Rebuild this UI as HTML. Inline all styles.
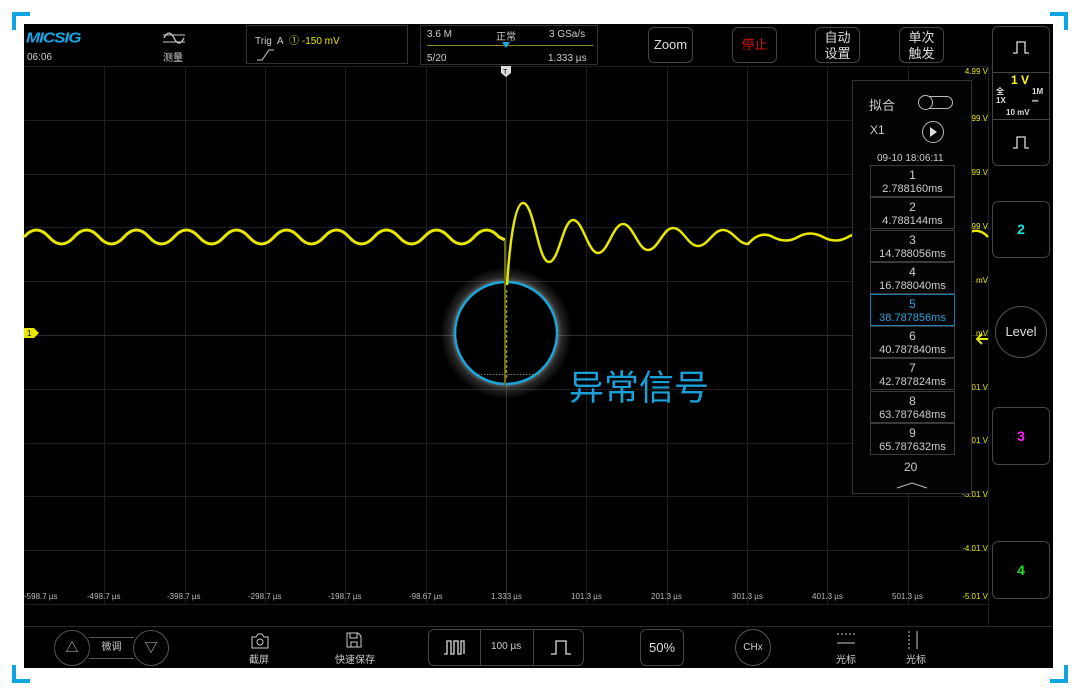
<!DOCTYPE html>
<html><head><meta charset="utf-8"><style>
*{margin:0;padding:0;box-sizing:border-box}
body{width:1080px;height:695px;background:#fff;position:relative;overflow:hidden;font-family:"Liberation Sans","Noto Sans CJK SC",sans-serif;color:#ccc}
.a{position:absolute}
.scr{left:24px;top:24px;width:1029px;height:644px;background:#000}
.btn{position:absolute;border:1px solid #444;border-radius:6px;color:#ddd;text-align:center;font-size:13px}
.br{position:absolute;background:#0ea5e0}
.vl{position:absolute;color:#e6e600;font-size:8px;right:92px}
.it{position:absolute;left:870px;width:85px;height:32px;border:1px solid #3a3a3a;text-align:center;font-size:12px;line-height:14px;padding-top:2px;color:#ccc}
.it small{font-size:11px;display:block}
.tl{position:absolute;top:592px;font-size:8px;color:#bbb}
</style></head><body>
<div class="br" style="left:12px;top:12px;width:18px;height:4px"></div>
<div class="br" style="left:12px;top:12px;width:4px;height:18px"></div>
<div class="br" style="left:1050px;top:12px;width:18px;height:4px"></div>
<div class="br" style="left:1064px;top:12px;width:4px;height:18px"></div>
<div class="br" style="left:12px;top:679px;width:18px;height:4px"></div>
<div class="br" style="left:12px;top:665px;width:4px;height:18px"></div>
<div class="br" style="left:1050px;top:679px;width:18px;height:4px"></div>
<div class="br" style="left:1064px;top:665px;width:4px;height:18px"></div>
<div class="a scr"></div>

<!-- top bar -->
<div class="a" style="left:26px;top:28px;color:#1aa6e6;font-weight:900;font-style:italic;font-size:17px;letter-spacing:-1px;transform:scaleY(0.85)">MICSIG</div>
<div class="a" style="left:27px;top:52px;font-size:10px;color:#ccc">06:06</div>
<svg class="a" style="left:162px;top:30px" width="24" height="16"><path d="M1 5h22M1 12h22" stroke="#ccc" stroke-width="1"/><path d="M2 8Q7 -2 12 8T22 8" stroke="#ccc" fill="none" stroke-width="1.3"/></svg>
<div class="a" style="left:163px;top:49px;font-size:10px">测量</div>
<div class="a" style="left:246px;top:25px;width:162px;height:39px;border:1px solid #333"></div>
<div class="a" style="left:255px;top:32px;font-size:10px">Trig&nbsp; A&nbsp; <span style="color:#e6e600">① -150 mV</span></div>
<svg class="a" style="left:256px;top:46px" width="20" height="16"><path d="M1 14h5l7-10h5" stroke="#ccc" fill="none"/></svg>
<div class="a" style="left:420px;top:25px;width:178px;height:40px;border:1px solid #333"></div>
<div class="a" style="left:427px;top:29px;font-size:10px">3.6 M</div>
<div class="a" style="left:496px;top:28px;font-size:10px">正常</div>
<div class="a" style="left:549px;top:29px;font-size:10px">3 GSa/s</div>
<div class="a" style="left:427px;top:45px;width:166px;height:1px;background:#8a8a20"></div>
<svg class="a" style="left:501px;top:41px" width="10" height="8"><path d="M1 1h8l-4 6z" fill="#1aa6e6"/></svg>
<div class="a" style="left:427px;top:53px;font-size:10px">5/20</div>
<div class="a" style="left:548px;top:53px;font-size:10px">1.333 µs</div>
<div class="btn" style="left:648px;top:27px;width:45px;height:36px;line-height:34px">Zoom</div>
<div class="btn" style="left:732px;top:27px;width:45px;height:36px;line-height:34px;color:#d01010">停止</div>
<div class="btn" style="left:815px;top:27px;width:45px;height:36px;line-height:16px;padding-top:2px">自动<br>设置</div>
<div class="btn" style="left:899px;top:27px;width:45px;height:36px;line-height:16px;padding-top:2px">单次<br>触发</div>

<!-- grid -->
<svg class="a" style="left:0;top:0" width="1080" height="695">
<g stroke="#1e1e1e" stroke-width="1">
<path d="M24.5 66.5H988M24.5 120.5H988M24.5 174.5H988M24.5 227.5H988M24.5 281.5H988M24.5 389.5H988M24.5 443.5H988M24.5 496.5H988M24.5 550.5H988M24.5 604.5H988"/>
<path d="M104.5 66V604M185.5 66V604M265.5 66V604M345.5 66V604M426.5 66V604M586.5 66V604M667.5 66V604M747.5 66V604M827.5 66V604M908.5 66V604M988.5 66V626"/>
<path d="M24 626.5H988" stroke="#333"/>
</g>
<path d="M24 335.5H988M506.5 66V604" stroke="#2c2c2c"/>
<!-- trigger marker -->
<path d="M501 66h10v7l-5 4-5-4z" fill="#ddd"/><text x="503" y="74" font-size="7" fill="#000" font-family="Liberation Sans">T</text>
<path d="M24 328h10l5 5-5 5H24z" fill="#e6e600"/><text x="27" y="336" font-size="8" fill="#000" font-family="Liberation Sans">1</text>
<!-- circle glow -->
<defs><radialGradient id="g"><stop offset="0.72" stop-color="#fff" stop-opacity="0.55"/><stop offset="0.85" stop-color="#fff" stop-opacity="0.15"/><stop offset="1" stop-color="#fff" stop-opacity="0"/></radialGradient></defs>
<circle cx="506" cy="333" r="66" fill="url(#g)"/>
<circle cx="506" cy="333" r="51" fill="#000" stroke="#1aa6d9" stroke-width="2.5"/>
<path d="M478 374.5H540" stroke="#777" stroke-dasharray="1.5 1.5"/>
<!-- waveform -->
<g fill="none" stroke="#e6e600" stroke-width="3">
<path d="M24 237Q36.5 223 49 237T74 237T99 237T124 237T149 237T174 237T199 237T224 237T249 237T274 237T299 237T324 237T349 237T374 237T399 237T424 237T449 237T474 237T499 237L505 240"/>
<path d="M505 240V385" stroke-width="2" stroke="#6a6a10"/>
<path d="M506.5 290V380" stroke-width="1.5" stroke="#9a9a20" stroke-dasharray="3 2"/>
<path d="M507 285C510 240 515 203 523 203C534 203 538 262 549 262C559 262 563 220 573 220C583 220 588 253 598 253C608 253 613 224 623 224C633 224 638 250 648 250C658 250 663 228 673 228C683 228 688 246 698 246C708 246 713 230 723 230C733 230 738 244 748 244Q760 230 773 237" stroke-width="2.5"/>
<path d="M773 237Q786 244 798 237T823 237T848 237T873 237" stroke-width="2.5"/>
<path d="M988 237Q980 228 970 232" stroke-width="2.5"/>
</g>
</svg>
<div class="a" style="left:569px;top:364px;font-size:35px;color:#1aa0d8;font-family:'Noto Sans CJK SC',sans-serif;line-height:44px">异常信号</div>

<!-- volt labels -->
<div class="vl" style="top:67px">4.99 V</div>
<div class="vl" style="top:114px">3.99 V</div>
<div class="vl" style="top:168px">2.99 V</div>
<div class="vl" style="top:222px">.99 V</div>
<div class="vl" style="top:276px">mV</div>
<div class="vl" style="top:329px">mV</div>
<div class="vl" style="top:383px">-1.01 V</div>
<div class="vl" style="top:436px">-2.01 V</div>
<div class="vl" style="top:490px">-3.01 V</div>
<div class="vl" style="top:544px">-4.01 V</div>
<div class="vl" style="top:592px">-5.01 V</div>
<svg class="a" style="left:975px;top:333px" width="14" height="12"><path d="M13 6H3M7 1L2 6l5 5" stroke="#e6e600" stroke-width="2" fill="none"/></svg>

<!-- time labels -->
<div class="tl" style="left:24px">-598.7 µs</div>
<div class="tl" style="left:87px">-498.7 µs</div>
<div class="tl" style="left:167px">-398.7 µs</div>
<div class="tl" style="left:248px">-298.7 µs</div>
<div class="tl" style="left:328px">-198.7 µs</div>
<div class="tl" style="left:409px">-98.67 µs</div>
<div class="tl" style="left:491px">1.333 µs</div>
<div class="tl" style="left:571px">101.3 µs</div>
<div class="tl" style="left:651px">201.3 µs</div>
<div class="tl" style="left:732px">301.3 µs</div>
<div class="tl" style="left:812px">401.3 µs</div>
<div class="tl" style="left:892px">501.3 µs</div>

<!-- side panel -->
<div class="a" style="left:852px;top:80px;width:120px;height:414px;border:1px solid #333;background:#030303"></div>
<div class="a" style="left:869px;top:95px;font-size:13px">拟合</div>
<div class="a" style="left:919px;top:96px;width:34px;height:13px;border:1px solid #bbb;border-radius:7px"></div>
<div class="a" style="left:918px;top:95px;width:15px;height:15px;border:1px solid #bbb;border-radius:50%;background:#000"></div>
<div class="a" style="left:870px;top:123px;font-size:12px">X1</div>
<svg class="a" style="left:921px;top:120px" width="24" height="24"><circle cx="12" cy="12" r="10.5" stroke="#bbb" fill="none"/><path d="M9 7l7 5-7 5z" fill="#ddd"/></svg>
<div class="a" style="left:877px;top:153px;font-size:10px">09-10 18:06:11</div>
<div class="it" style="top:165px">1<small>2.788160ms</small></div>
<div class="it" style="top:197px">2<small>4.788144ms</small></div>
<div class="it" style="top:230px">3<small>14.788056ms</small></div>
<div class="it" style="top:262px">4<small>16.788040ms</small></div>
<div class="it" style="top:294px;border-color:#1a7fb0;color:#2aa0da">5<small>38.787856ms</small></div>
<div class="it" style="top:326px">6<small>40.787840ms</small></div>
<div class="it" style="top:358px">7<small>42.787824ms</small></div>
<div class="it" style="top:391px">8<small>63.787648ms</small></div>
<div class="it" style="top:423px">9<small>65.787632ms</small></div>
<div class="a" style="left:904px;top:460px;font-size:12px">20</div>
<svg class="a" style="left:896px;top:481px" width="32" height="8"><path d="M1 7L16 2l15 5" stroke="#bbb" fill="none"/></svg>

<!-- right column -->
<div class="btn" style="left:992px;top:26px;width:58px;height:140px"></div>
<div class="a" style="left:992px;top:72px;width:58px;height:1px;background:#444"></div>
<div class="a" style="left:992px;top:119px;width:58px;height:1px;background:#444"></div>
<svg class="a" style="left:1012px;top:40px" width="18" height="14"><path d="M1 13h4V2h8v11h4" stroke="#ddd" fill="none" stroke-width="1.3"/></svg>
<svg class="a" style="left:1012px;top:135px" width="18" height="14"><path d="M1 13h4V2h8v11h4" stroke="#ddd" fill="none" stroke-width="1.3"/></svg>
<div class="a" style="left:1011px;top:73px;font-size:12px;font-weight:bold;color:#ffff20">1 V</div>
<div class="a" style="left:996px;top:87px;font-size:8px;font-weight:bold;color:#ddd;line-height:9px">全<br>1X</div>
<div class="a" style="left:1032px;top:87px;font-size:8px;font-weight:bold;color:#ddd;line-height:9px">1M<br>⎓</div>
<div class="a" style="left:1006px;top:108px;font-size:8px;font-weight:bold;color:#ddd">10 mV</div>
<div class="btn" style="left:992px;top:201px;width:58px;height:57px;line-height:55px;color:#20e0e0;font-weight:bold;font-size:14px">2</div>
<div class="a" style="left:995px;top:306px;width:52px;height:52px;border:1px solid #555;border-radius:50%;text-align:center;line-height:50px;font-size:13px;color:#ddd">Level</div>
<div class="btn" style="left:992px;top:407px;width:58px;height:58px;line-height:56px;color:#ff20ff;font-weight:bold;font-size:14px">3</div>
<div class="btn" style="left:992px;top:541px;width:58px;height:58px;line-height:56px;color:#20e020;font-weight:bold;font-size:14px">4</div>

<!-- bottom bar -->
<div class="a" style="left:24px;top:626px;width:1029px;height:1px;background:#2a2a2a"></div>
<div class="a" style="left:54px;top:630px;width:36px;height:36px;border:1px solid #555;border-radius:50%;text-align:center;line-height:34px;font-size:13px">△</div>
<div class="a" style="left:89px;top:637px;width:45px;height:22px;border-top:1px solid #555;border-bottom:1px solid #555;text-align:center;line-height:20px;font-size:10px">微调</div>
<div class="a" style="left:133px;top:630px;width:36px;height:36px;border:1px solid #555;border-radius:50%;text-align:center;line-height:34px;font-size:13px">▽</div>
<svg class="a" style="left:250px;top:632px" width="20" height="18"><path d="M2 5h4l2-3h4l2 3h4v11H2z" stroke="#ccc" fill="none"/><circle cx="10" cy="10" r="3" stroke="#ccc" fill="none"/></svg>
<div class="a" style="left:249px;top:651px;font-size:10px">截屏</div>
<svg class="a" style="left:345px;top:631px" width="18" height="18"><path d="M2 2h11l3 3v11H2z M5 2v5h7V2 M6 11h6v5H6z" stroke="#ccc" fill="none"/></svg>
<div class="a" style="left:335px;top:651px;font-size:10px">快速保存</div>
<div class="btn" style="left:428px;top:629px;width:156px;height:37px"></div>
<div class="a" style="left:480px;top:629px;width:1px;height:37px;background:#444"></div>
<div class="a" style="left:533px;top:629px;width:1px;height:37px;background:#444"></div>
<svg class="a" style="left:443px;top:639px" width="22" height="16"><path d="M1 15h3V2h4v13h3V2h4v13h3V2h3v13" stroke="#ddd" fill="none" stroke-width="1.3"/></svg>
<div class="a" style="left:491px;top:641px;font-size:10px">100 µs</div>
<svg class="a" style="left:550px;top:639px" width="22" height="16"><path d="M1 15h5V2h10v13h5" stroke="#ddd" fill="none" stroke-width="1.3"/></svg>
<div class="btn" style="left:640px;top:629px;width:44px;height:37px;line-height:35px">50%</div>
<div class="a" style="left:735px;top:629px;width:36px;height:37px;border:1px solid #555;border-radius:50%;text-align:center;line-height:35px;font-size:10px">CHx</div>
<svg class="a" style="left:836px;top:632px" width="20" height="14"><path d="M1 2h18" stroke="#ccc" stroke-dasharray="2 2"/><path d="M1 11h18" stroke="#ccc"/></svg>
<div class="a" style="left:836px;top:651px;font-size:10px">光标</div>
<svg class="a" style="left:906px;top:630px" width="14" height="20"><path d="M3 1v18" stroke="#ccc" stroke-dasharray="2 2"/><path d="M11 1v18" stroke="#ccc"/></svg>
<div class="a" style="left:906px;top:651px;font-size:10px">光标</div>
</body></html>
